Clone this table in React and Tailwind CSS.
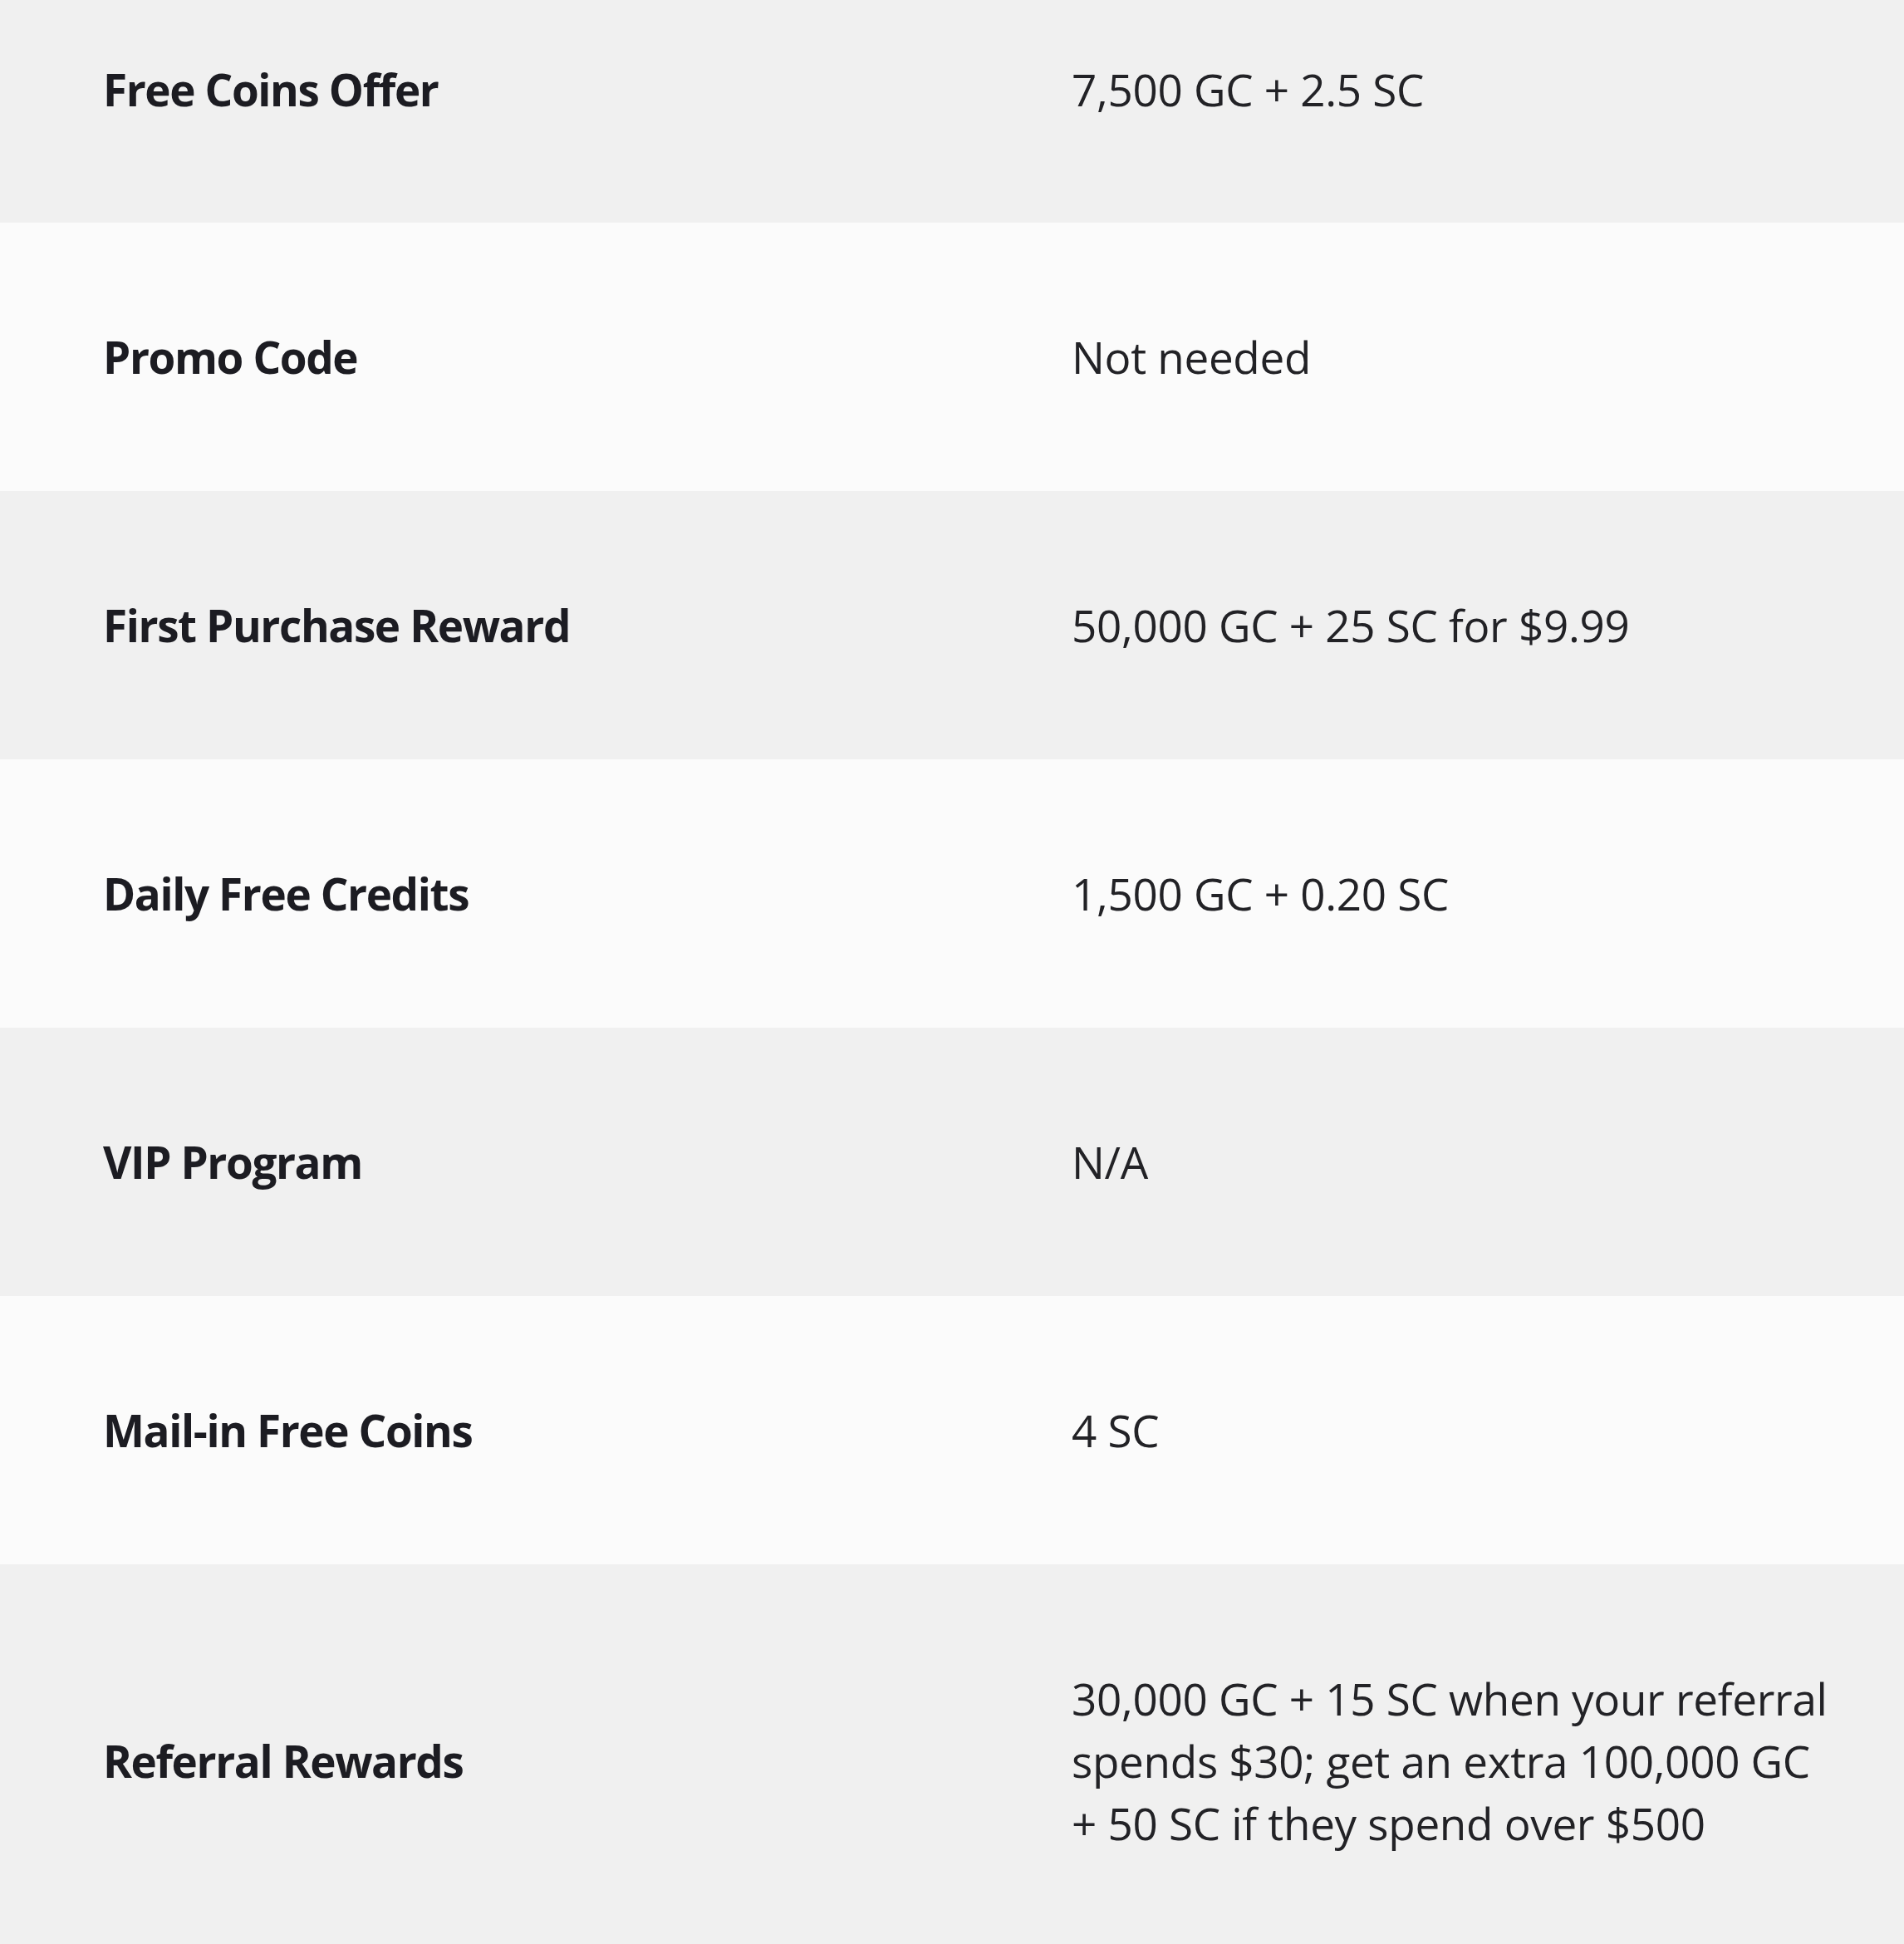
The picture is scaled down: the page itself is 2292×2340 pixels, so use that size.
import React from 'react';

const rows = [
  { label: 'Free Coins Offer', value: '7,500 GC + 2.5 SC' },
  { label: 'Promo Code', value: 'Not needed' },
  { label: 'First Purchase Reward', value: '50,000 GC + 25 SC for $9.99' },
  { label: 'Daily Free Credits', value: '1,500 GC + 0.20 SC' },
  { label: 'VIP Program', value: 'N/A' },
  { label: 'Mail-in Free Coins', value: '4 SC' },
  {
    label: 'Referral Rewards',
    value: '30,000 GC + 15 SC when your referral spends $30; get an extra 100,000 GC + 50 SC if they spend over $500',
  },
];

function App() {
  return (
    <div className="w-[2292px] h-[2340px] overflow-hidden bg-[#fbfbfb] font-['Open_Sans','Noto_Sans',sans-serif]">
      {rows.map((row, i) => {
        const first = i === 0;
        const last = i === rows.length - 1;
        return (
          <div
            key={row.label}
            className={`grid grid-cols-[1164px_1fr] items-center ${
              i % 2 === 0 ? 'bg-[#f0f0f0]' : 'bg-[#fbfbfb]'
            } ${first ? 'h-[268px] pb-[54px]' : last ? 'h-[457px] pt-[16px]' : 'h-[323px]'}`}
          >
            <div className="pl-[124px] text-[53px] leading-[75px] font-bold tracking-[-1.4px] text-[#1c1c22]">
              {row.label}
            </div>
            <div className="pl-[126px] pr-[80px] text-[53px] leading-[75px] tracking-[-0.3px] text-[#222226]">
              {row.value}
            </div>
          </div>
        );
      })}
    </div>
  );
}

export default App;
